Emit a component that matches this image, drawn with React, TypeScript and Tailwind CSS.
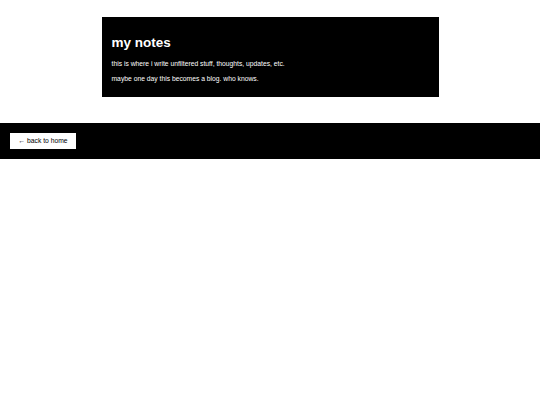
import React from 'react';

const App: React.FC = () => {
  return (
    <div className="min-h-[405px] bg-white font-['Liberation_Sans',Arial,sans-serif]">
      {/* header card */}
      <div className="pt-[17px]">
        <div className="mx-auto w-[337px] h-[80px] bg-black text-white px-[10px] pt-[17px]">
          <h1 className="text-[13.5px] font-bold leading-[17px]">my notes</h1>
          <p className="mt-[5px] text-[6.75px] leading-[15px]">this is where i write unfiltered stuff, thoughts, updates, etc.</p>
          <p className="text-[6.75px] leading-[15px]">maybe one day this becomes a blog. who knows.</p>
        </div>
      </div>

      {/* nav bar */}
      <nav className="mt-[26px] h-[36px] bg-black flex items-center px-[10px]">
        <button className="h-[16px] w-[66px] bg-white text-black text-[6.75px] leading-none">
          ← back to home
        </button>
      </nav>
    </div>
  );
};

export default App;
